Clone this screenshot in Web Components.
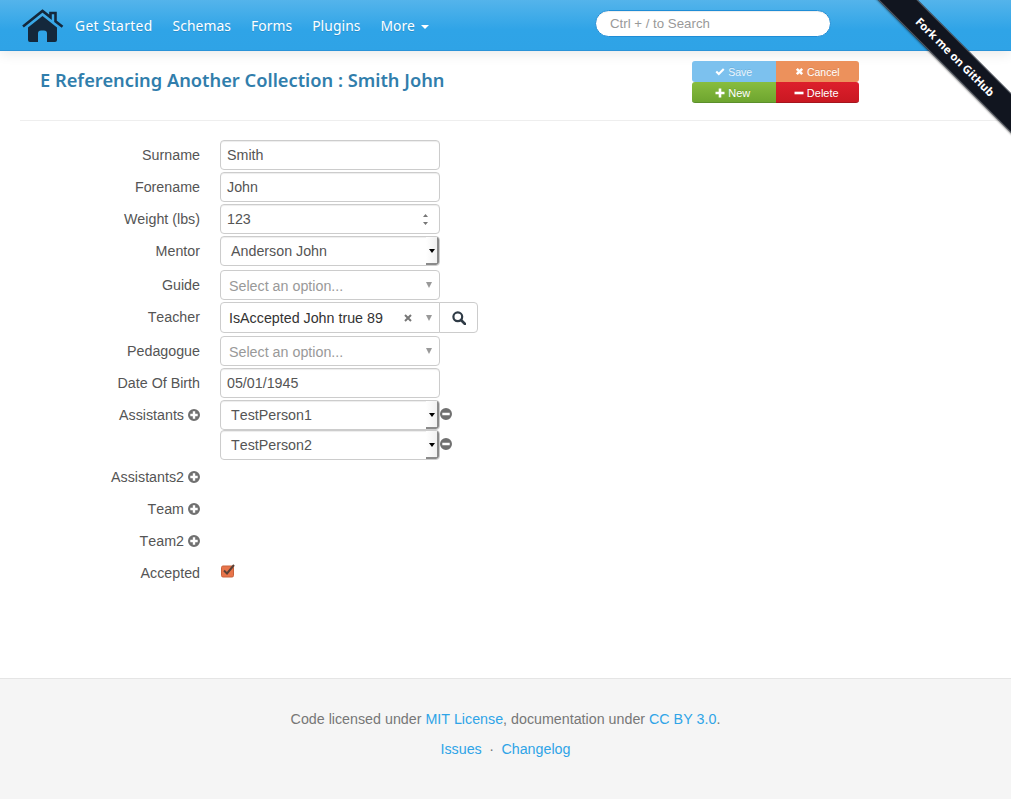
<!DOCTYPE html>
<html><head><meta charset="utf-8">
<style>
html,body{margin:0;padding:0;background:#fff}
body{font:14.28px/20px "Liberation Sans",Arial,sans-serif;color:#555;height:799px;overflow:hidden;position:relative}
</style></head>
<body>
<top-nav></top-nav>
<fork-ribbon></fork-ribbon>
<page-head title-text="E Referencing Another Collection : Smith John"></page-head>
<main-form>
  <form-row label="Surname"><text-box value="Smith"></text-box></form-row>
  <form-row label="Forename"><text-box value="John"></text-box></form-row>
  <form-row label="Weight (lbs)"><text-box value="123" spinner></text-box></form-row>
  <form-row label="Mentor" after="4"><native-select value="Anderson John"></native-select></form-row>
  <form-row label="Guide"><combo-box placeholder="Select an option..."></combo-box></form-row>
  <form-row label="Teacher" after="3" high="31"><combo-box value="IsAccepted John true 89" clear></combo-box><search-btn></search-btn></form-row>
  <form-row label="Pedagogue"><combo-box placeholder="Select an option..."></combo-box></form-row>
  <form-row label="Date Of Birth"><text-box value="05/01/1945"></text-box></form-row>
  <form-row label="Assistants" add after="0"><native-select value="TestPerson1"></native-select><round-icon kind="minus"></round-icon></form-row>
  <form-row after="2" high="30"><native-select value="TestPerson2"></native-select><round-icon kind="minus"></round-icon></form-row>
  <form-row label="Assistants2" add></form-row>
  <form-row label="Team" add></form-row>
  <form-row label="Team2" add></form-row>
  <form-row label="Accepted"><check-mark></check-mark></form-row>
</main-form>
<site-footer></site-footer>
<script>
function def(name, html, init){
  customElements.define(name, class extends HTMLElement{
    connectedCallback(){
      if(this.shadowRoot) return;
      const r=this.attachShadow({mode:'open'});
      r.innerHTML=typeof html==='function'?html(this):html;
      if(init) init(this,r);
    }
  });
}
const a=(e,n,d='')=>e.hasAttribute(n)?e.getAttribute(n):d;

def('top-nav',`<style>
:host{display:flex;align-items:stretch;height:50px;border-bottom:1px solid #2a93d8;box-shadow:0 3px 12px rgba(0,0,0,.09);
 background:linear-gradient(#54b4eb,#2fa4e7 60%,#2fa3e6);padding-left:20px;position:relative;box-sizing:content-box}
svg{display:block;margin:7px 0 0 1px;width:43px;height:36px;flex:none}
nav{display:flex;margin-left:1px}
a{font:400 13.8px/52px "Noto Sans",sans-serif;letter-spacing:.1px;color:#fff;text-shadow:0 1px 0 rgba(0,0,0,.15);padding:0 10px;white-space:nowrap}
a:first-child{letter-spacing:.35px}
.caret{display:inline-block;border-top:4px solid #fff;border-left:4.5px solid transparent;border-right:4.5px solid transparent;margin-left:2px;vertical-align:2px}
.search{position:absolute;left:595px;top:10px;width:236px;height:27px;box-sizing:border-box;background:#fff;border:1px solid #1f8dd6;border-radius:14px;
 padding-left:14px;font:13.27px/25px "Liberation Sans",sans-serif;font-kerning:none;color:#999;box-shadow:inset 0 1px 1px rgba(0,0,0,.075)}
</style>
<svg viewBox="0 0 43 36"><path d="M2 19.500 21.500 4l8 6.300V6h5v8.300l7 5.500" fill="none" stroke="#14283c" stroke-width="2.600" stroke-linejoin="miter"/>
<path fill="#14283c" d="M21.500 9 7 20.500V33a2 2 0 0 0 2 2h8V26.500a3 3 0 0 1 3-3h3a3 3 0 0 1 3 3V35h8a2 2 0 0 0 2-2V20.500Z"/></svg>
<nav><a>Get Started</a><a>Schemas</a><a>Forms</a><a>Plugins</a><a>More <span class="caret"></span></a></nav>
<div class="search">Ctrl + / to Search</div>`);

def('fork-ribbon',`<style>
:host{display:block;position:absolute;top:0;right:0;width:149px;height:149px;overflow:hidden;z-index:5;pointer-events:none}
div{position:absolute;left:-27px;top:43px;width:240px;height:28px;box-sizing:border-box;transform:rotate(45deg);transform-origin:center;
 background:#11151f;border-top:1px solid #555a63;border-bottom:1px solid #555a63;box-shadow:0 1px 2px rgba(0,0,0,.45);
 font:700 11.300px/25px "Noto Sans",sans-serif;color:#fff;text-align:center}
</style><div>Fork me on GitHub</div>`);

def('page-head',e=>`<style>
:host{display:block;margin:0 0 0 20px;height:69px;border-bottom:1px solid #eee;position:relative}
h1{margin:0;padding:18px 0 0 20px;font:600 18.270px/22px "Noto Sans",sans-serif;color:#317eac;white-space:nowrap}
</style><h1>${a(e,'title-text')}</h1><action-buttons></action-buttons>`);

def('action-buttons',`<style>
:host{display:grid;grid-template-columns:83.500px 83.500px;grid-template-rows:21px 21px;position:absolute;left:672px;top:10px;
 font:10.500px/20px "Liberation Sans",sans-serif;font-kerning:none;color:#fff}
div{display:flex;align-items:center;justify-content:center;gap:3px;box-sizing:border-box;text-shadow:0 -1px 0 rgba(0,0,0,.1)}
svg{width:10px;height:10px;fill:#fff;flex:none}
.s{background:#7cc1ee;border-radius:3px 0 0 3px;color:#e9f5fd}
.c{background:#ec915c;border-radius:0 3px 3px 0}
.n{background:linear-gradient(#88bd3f,#6ea52f);border-bottom:1px solid #5b8f2b;border-radius:3px 0 0 3px;font-size:11px;padding:2px 2px 0 0}
.d{background:linear-gradient(#dd1f2c,#c91822);border-bottom:1px solid #a5151e;border-radius:0 3px 3px 0;font-size:11px;padding:2px 2px 0 0}
</style>
<div class="s"><svg viewBox="0 0 10 10"><path d="M.5 5.200 2 3.700l1.800 1.800L8 1.300l1.500 1.500L3.800 8.500Z"/></svg>Save</div>
<div class="c"><svg viewBox="0 0 10 10" style="width:9px;height:9px"><path d="m1 3 2-2 2 2 2-2 2 2-2 2 2 2-2 2-2-2-2 2-2-2 2-2Z"/></svg>Cancel</div>
<div class="n"><svg viewBox="0 0 10 10"><path d="M3.700 .5h2.600v3.200H9.500v2.600H6.300V9.500H3.700V6.300H.5V3.700h3.200Z"/></svg>New</div>
<div class="d"><svg viewBox="0 0 10 10"><path d="M.5 3.700h9v2.600h-9Z"/></svg>Delete</div>`);

def('main-form',`<style>:host{display:block;padding-top:19px}</style><slot></slot>`);

def('form-row',e=>{
 const lab=a(e,'label'), add=e.hasAttribute('add');
 const h=a(e,'high','30'), after=a(e,'after','2');
 return `<style>
 :host{display:flex;height:${h}px;margin-bottom:${after}px;font:14.28px/20px "Liberation Sans",sans-serif;font-kerning:none;color:#555}
 .l{width:200px;flex:none;box-sizing:border-box;display:flex;justify-content:flex-end;align-items:center;gap:4px;padding-bottom:1px;white-space:nowrap}
 .f{margin-left:20px;display:flex;align-items:flex-start}
 </style><div class="l">${lab}${add?'<round-icon kind="plus"></round-icon>':''}</div><div class="f"><slot></slot></div>`;
});

def('round-icon',e=>{
 const p=a(e,'kind')==='plus'?'M4.800 2.300h2.400v2.500h2.500v2.400H7.200v2.500H4.800V7.200H2.300V4.800h2.500Z':'M2.300 4.800h7.400v2.400H2.300Z';
 const minus=a(e,'kind')==='minus';
 return `<style>:host{display:inline-block;width:12px;height:12px;flex:none;${minus?'margin:8px 0 0 0':''}}svg{display:block;width:12px;height:12px}</style>
 <svg viewBox="0 0 12 12"><path fill-rule="evenodd" fill="#707070" d="M6 0a6 6 0 1 1 0 12A6 6 0 0 1 6 0Z${p}"/></svg>`;
});

def('text-box',e=>`<style>
:host{display:block;width:220px;height:30px;box-sizing:border-box;border:1px solid #ccc;border-radius:4px;background:#fff;
 box-shadow:inset 0 1px 1px rgba(0,0,0,.075);padding:0 6px;font:14.28px/28px "Liberation Sans",sans-serif;font-kerning:none;color:#555;position:relative}
svg{position:absolute;right:10px;top:8px;width:7px;height:13px}
</style>${a(e,'value')}${e.hasAttribute('spinner')?'<svg viewBox="0 0 7 13"><path fill="#777" d="M3.500 1 6 4H1ZM3.500 12 1 9h5Z"/></svg>':''}`);

def('native-select',e=>`<style>
:host{display:block;width:220px;height:30px;box-sizing:border-box;border:1px solid #ccc;border-radius:4px;background:#fff;position:relative;
 box-shadow:inset 0 1px 1px rgba(0,0,0,.075);padding:0 10px;font:14.28px/28px "Liberation Sans",sans-serif;font-kerning:none;color:#555;overflow:hidden}
.b{position:absolute;right:0;top:0;bottom:0;width:13px;background:linear-gradient(90deg,#fff,#f1f1f1);border-right:2px solid #8a8a8a;border-bottom:2px solid #8a8a8a;border-radius:0 0 3px 0;box-sizing:border-box}
.b::after{content:"";position:absolute;left:3px;top:12px;border-top:4px solid #000;border-left:3px solid transparent;border-right:3px solid transparent}
</style>${a(e,'value')}<div class="b"></div>`);

def('combo-box',e=>{
 const v=a(e,'value'), ph=a(e,'placeholder'), cl=e.hasAttribute('clear');
 return `<style>
 :host{display:block;width:220px;height:${cl?31:30}px;box-sizing:border-box;border:1px solid #ccc;border-radius:${cl?'4px 0 0 4px':'4px'};background:#fff;position:relative;
 padding:0 8px;font:14.28px/${cl?30:29}px "Liberation Sans",sans-serif;font-kerning:none;color:${ph?'#999':'#333'};white-space:nowrap;padding-top:${cl?0:1}px}
 .a{position:absolute;right:7px;top:${cl?12:11}px;border-top:6px solid #999;border-left:3.500px solid transparent;border-right:3.500px solid transparent}
 svg{position:absolute;right:27px;top:11px;width:8px;height:8px}
 </style>${v||ph}${cl?'<svg viewBox="0 0 8 8"><path stroke="#777" stroke-width="2" d="m1 1 6 6M7 1 1 7"/></svg>':''}<div class="a"></div>`;
});

def('search-btn',`<style>
:host{display:flex;align-items:center;justify-content:center;width:39px;height:31px;box-sizing:border-box;margin-left:-1px;border:1px solid #ccc;border-radius:0 4px 4px 0;background:#fff}
svg{width:14px;height:14px}
</style><svg viewBox="0 0 14 14"><circle cx="5.800" cy="5.800" r="4.400" fill="none" stroke="#2f3b46" stroke-width="2.200"/><path d="m9 9 4 4" stroke="#2f3b46" stroke-width="2.600" stroke-linecap="round"/></svg>`);

def('check-mark',`<style>
:host{display:block;width:14px;height:14px;margin-top:6px}
svg{display:block;width:14px;height:14px;overflow:visible}
</style><svg viewBox="0 0 14 14"><rect x="1.500" y="2" width="12" height="11" rx="1.500" fill="#e8744a" stroke="#c8623c"/><path d="m4 6.500 3 3 7-8.500" fill="none" stroke="#5a4035" stroke-width="2"/></svg>`);

def('site-footer',`<style>
:host{display:block;position:absolute;left:0;right:0;bottom:0;height:121px;background:#f5f5f5;border-top:1px solid #e5e5e5;text-align:center;
 font:14.28px/20px "Liberation Sans",sans-serif;font-kerning:none;color:#777;padding-top:30px;box-sizing:border-box}
p{margin:0 0 10px}
a{color:#2fa4e7}
.dot{margin:0 3.500px}
</style><p>Code licensed under <a>MIT License</a>, documentation under <a>CC BY 3.0</a>.</p>
<p><a>Issues</a> <span class="dot">·</span> <a>Changelog</a></p>`);
</script>
</body></html>
